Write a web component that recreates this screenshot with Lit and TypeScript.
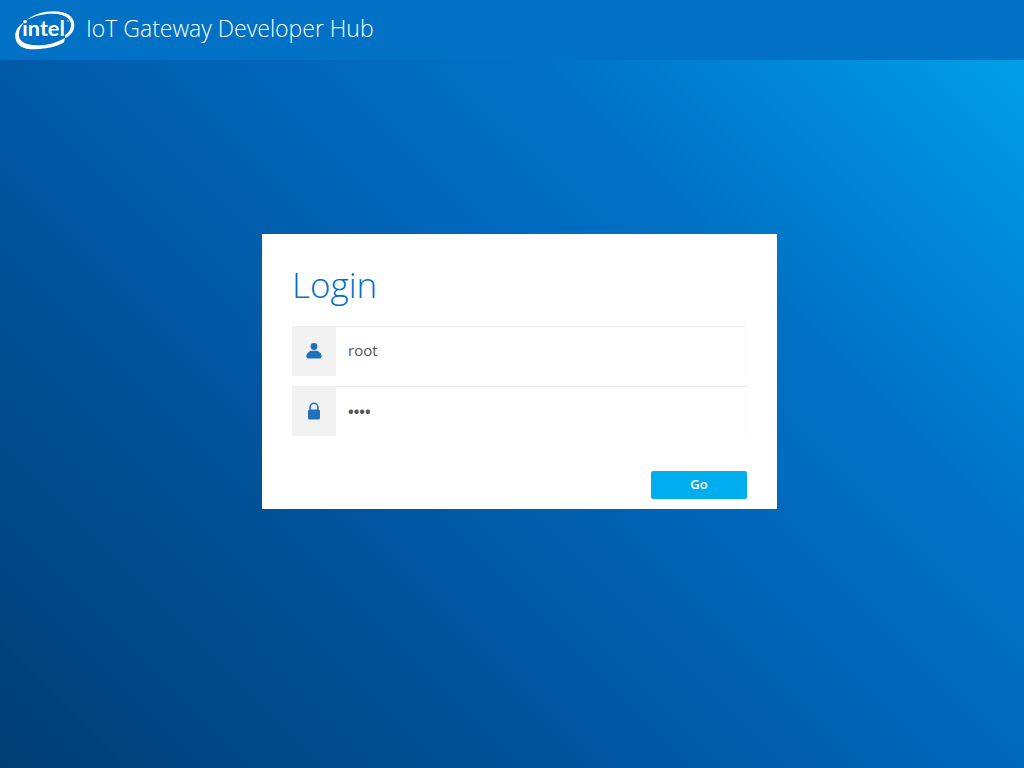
import { LitElement, html, css } from "lit";
import { customElement } from "lit/decorators.js";

@customElement("app-root")
export class AppRoot extends LitElement {
  static styles = css`
    :host {
      display: flex;
      flex-direction: column;
      min-height: 100vh;
      font-family: "Open Sans", "Noto Sans", sans-serif;
      background: linear-gradient(45deg, #003f75 0%, #00427b 6%, #0059a5 39%, #0068bc 56%, #0071c5 69%, #00a1ea 98%, #00a3ec 100%);
    }
    * {
      box-sizing: border-box;
    }
    .header {
      display: flex;
      align-items: center;
      gap: 11px;
      height: 60px;
      padding: 0 15px;
      background: #0071c5;
      color: #fff;
    }
    .logo {
      width: 60px;
      height: 40px;
      flex: none;
    }
    .wordmark {
      font: 700 65px Lato, sans-serif;
    }
    .product {
      margin: 0;
      padding-bottom: 4px;
      font-size: 23px;
      line-height: 32px;
      font-weight: 300;
    }
    .main {
      display: flex;
      justify-content: center;
      padding: 174px 0 32px 15px;
    }
    .card {
      display: flex;
      flex-direction: column;
      gap: 10px;
      width: 100%;
      max-width: 515px;
      padding: 26px 30px 10px;
      background: #fff;
    }
    .title {
      margin: 0 0 6px;
      font-size: 35px;
      line-height: 50px;
      font-weight: 300;
      color: #0071c5;
    }
    .field {
      display: flex;
      height: 50px;
    }
    .tag {
      display: flex;
      align-items: center;
      justify-content: center;
      width: 44px;
      background: #f2f2f2;
      color: #2170ba;
    }
    .icon {
      width: 16px;
      height: 18px;
    }
    .input {
      flex: 1;
      min-width: 0;
      padding: 0 12px 2px;
      border: 0;
      border-radius: 0;
      outline: none;
      background: #fff;
      box-shadow: inset 0 1px 1px #ececec, inset -1px 0 0 #fafafa;
      font: 15px "Open Sans", "Noto Sans", sans-serif;
      color: #555;
    }
    .input[type="password"] {
      padding-bottom: 0;
      font-weight: 700;
    }
    .go {
      align-self: flex-end;
      width: 96px;
      height: 28px;
      margin-top: 25px;
      padding: 0 0 2px;
      border: 0;
      border-radius: 2px;
      background: #00aeef;
      color: #fff;
      font: 600 13px "Open Sans", "Noto Sans", sans-serif;
    }
  `;

  render() {
    return html`
      <header class="header">
        <svg class="logo" viewBox="21 18 180 120" role="img" aria-label="Intel">
          <g fill="#fff">
            <path d="M50 54C28 67 20 84 22 101C25 125 47 137 82 136C115 135 150 127 168 115L171 101C148 116 113 125 85 124C54 123 36 114 33 97C31 82 37 68 50 54Z" />
            <path d="M56 48C78 32 105 22 138 22C175 22 199 37 199 63C199 81 188 95 171 103L171 93C183 85 189 76 189 63C189 42 168 30 138 29C106 28 80 35 56 48Z" />
            <circle cx="180" cy="51" r="2" />
            <text class="wordmark" x="43" y="96">intel</text>
          </g>
        </svg>
        <h1 class="product">IoT Gateway Developer Hub</h1>
      </header>
      <main class="main">
        <form class="card" @submit=${(e: Event) => e.preventDefault()}>
          <h2 class="title">Login</h2>
          <div class="field">
            <label class="tag" for="user" aria-label="User name">
              <svg class="icon" viewBox="0 0 16 18" fill="currentColor">
                <circle cx="8" cy="4.5" r="3.4" />
                <path d="M5 8.8H11C13 9.4 15.6 11.6 15.6 14.2Q15.6 16.5 13.4 16.5H2.6Q.4 16.5 .4 14.2C.4 11.6 3 9.4 5 8.8Z" />
              </svg>
            </label>
            <input class="input" id="user" type="text" value="root" />
          </div>
          <div class="field">
            <label class="tag" for="pass" aria-label="Password">
              <svg class="icon" viewBox="0 0 16 18" fill="currentColor">
                <path d="M4.1 8.5V5.2a3.9 3.9 0 0 1 7.8 0V8.5" fill="none" stroke="currentColor" stroke-width="1.6" />
                <rect x="2" y="7.6" width="12" height="10" rx="1.5" />
              </svg>
            </label>
            <input class="input" id="pass" type="password" value="root" />
          </div>
          <button class="go" type="submit">Go</button>
        </form>
      </main>
    `;
  }
}
